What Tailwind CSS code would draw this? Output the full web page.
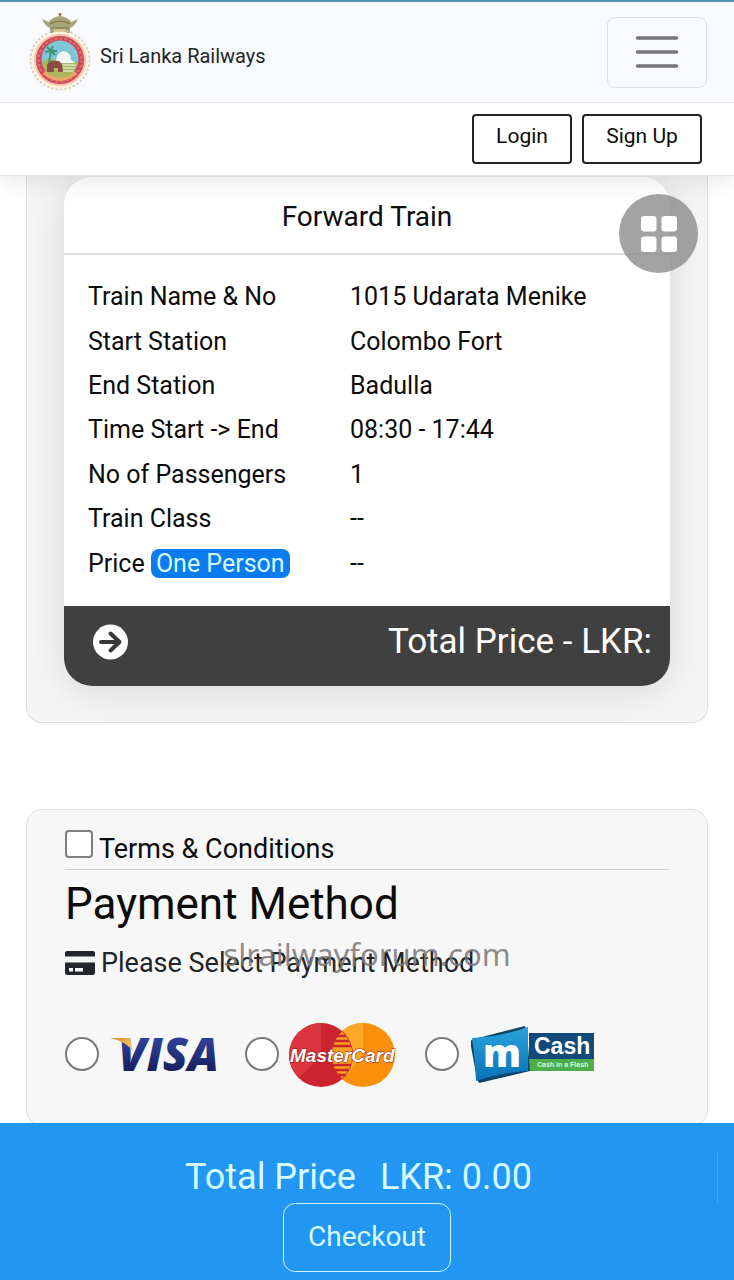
<!DOCTYPE html>
<html lang="en">
<head>
    <meta charset="UTF-8">
    <meta name="viewport" content="width=device-width, initial-scale=1.0">
    <title>Sri Lanka Railways - Reservation</title>
    <script src="https://cdn.jsdelivr.net/npm/@tailwindcss/browser@4"></script>
</head>
<body class="min-h-screen bg-white text-[#0c0c0c] font-['Roboto',sans-serif]">

    <!-- Navbar -->
    <header class="relative z-10 border-b border-[#e4e4e4] bg-white shadow-[0_8px_20px_rgba(0,0,0,0.08)]">
        <nav class="flex h-[103px] items-center justify-between border-t-2 border-b border-t-[#4f9aae] border-b-[#e4e4e6] bg-[#f9fafe] pl-7 pr-[27px]">
            <a href="#" class="flex items-center gap-2 text-xl text-[#212529]">
                <svg class="h-20 w-16" viewBox="0 0 64 80" aria-hidden="true">
                    <!-- crown -->
                    <path d="M14 7 L21 10 Q24 5 32 4 Q40 5 43 10 L50 7 Q47 14 42 16 V21 H22 V16 Q17 14 14 7Z" fill="#a7a579"/>
                    <path d="M22 12 Q32 6 42 12 M23 16 H41 M23 20 H41" fill="none" stroke="#777847" stroke-width="1.2"/>
                    <path d="M26 17 H38 V20 H26Z" fill="#d1bd84"/>
                    <circle cx="32" cy="2.5" r="1.4" fill="#9c5a48"/>
                    <!-- badge rings -->
                    <circle cx="32" cy="48" r="28.5" fill="#fdf0dc"/>
                    <circle cx="32" cy="48" r="29.5" fill="none" stroke="#dcc8ac" stroke-width="1.6" stroke-dasharray="2.4 2"/>
                    <circle cx="32" cy="48" r="26" fill="#f6c3a8"/>
                    <circle cx="32" cy="48" r="24" fill="#cf4660"/>
                    <circle cx="32" cy="48" r="21.5" fill="none" stroke="#dd7458" stroke-width="2" stroke-dasharray="3 2"/>
                    <path d="M15 62 Q32 76 49 62 L46 58 Q32 69 18 58Z" fill="#eda468"/>
                    <!-- scene -->
                    <circle cx="32" cy="47" r="18.5" fill="#7fc6d8"/>
                    <path d="M14 50 Q22 44 30 49 T50 49 Q48 65 32 65.5 Q16 64 14 50Z" fill="#a9b65a"/>
                    <path d="M28 49 Q29 40 36 39 Q43 41 43 48 L47 51 H28Z" fill="#f3f6f5"/>
                    <path d="M35 53 H48 M35 56 H47 M35 59 H45" stroke="#dfe6c8" stroke-width="1.4"/>
                    <path d="M19 60 V53 Q21 48 27 49 Q32 48 34 53 L35 60 H30 V56 H26 V60Z" fill="#8d4c43"/>
                    <path d="M21 51 L23 39 M23 39 L17 40 M23 39 L19 35 M23 39 L25 34 M23 39 L29 39 M23 39 L27 43" stroke="#3e9472" stroke-width="2" fill="none"/>
                </svg>
                <span class="pt-2">Sri Lanka Railways</span>
            </a>
            <button type="button" aria-label="Toggle navigation" class="flex h-[71px] w-[100px] items-center justify-center rounded-lg border border-[#dfe0e4]">
                <svg class="h-9 w-11" viewBox="0 0 44 36" fill="none" stroke="#77777b" stroke-width="3.5" stroke-linecap="round" aria-hidden="true">
                    <path d="M2.5 4H41.5M2.5 18H41.5M2.5 32H41.5"/>
                </svg>
            </button>
        </nav>
        <div class="flex h-[72px] justify-end gap-[10px] pt-[11px] pr-8">
            <button type="button" class="h-[50px] w-[100px] rounded border-2 border-[#222] pb-1 text-[21px]">Login</button>
            <button type="button" class="h-[50px] w-[120px] rounded border-2 border-[#222] pb-1 text-[21px]">Sign Up</button>
        </div>
    </header>

    <!-- Floating menu -->
    <button type="button" aria-label="Menu" class="fixed top-[194px] right-9 z-20 flex size-[79px] items-center justify-center rounded-full bg-[#8c8c8c]/80">
        <svg class="size-9" viewBox="0 0 36 36" fill="#fff" aria-hidden="true">
            <rect x="0" y="0" width="15.5" height="15.5" rx="3"/>
            <rect x="20.5" y="0" width="15.5" height="15.5" rx="3"/>
            <rect x="0" y="20.5" width="15.5" height="15.5" rx="3"/>
            <rect x="20.5" y="20.5" width="15.5" height="15.5" rx="3"/>
        </svg>
    </button>

    <main class="px-[26px] pb-[154px]">
        <!-- Train details -->
        <section class="overflow-hidden rounded-b-2xl border border-t-0 border-[#dedede] bg-[#f5f5f5] px-[37px] pt-px pb-9">
            <div class="overflow-hidden rounded-[28px] bg-white shadow-[0_5px_40px_rgba(0,0,0,0.12)]">
                <h2 class="border-b-2 border-[#dcdcdc] pt-5 pb-4 text-center text-[28px] leading-10">Forward Train</h2>
                <div class="px-6 py-5">
                    <table class="h-[311px] w-full text-left text-[25px] leading-8">
                        <tr><th scope="row" class="w-[262px] font-normal">Train Name &amp; No</th><td>1015 Udarata Menike</td></tr>
                        <tr><th scope="row" class="font-normal">Start Station</th><td>Colombo Fort</td></tr>
                        <tr><th scope="row" class="font-normal">End Station</th><td>Badulla</td></tr>
                        <tr><th scope="row" class="font-normal">Time Start -&gt; End</th><td>08:30 - 17:44</td></tr>
                        <tr><th scope="row" class="font-normal">No of Passengers</th><td>1</td></tr>
                        <tr><th scope="row" class="font-normal">Train Class</th><td>--</td></tr>
                        <tr><th scope="row" class="font-normal">Price <span class="rounded-lg bg-[#0d7bf0] px-[5px] text-[#d5fbff]">One Person</span></th><td>--</td></tr>
                    </table>
                </div>
                <div class="flex h-20 items-center justify-between bg-[#404040] pr-[18px] pb-2 pl-7 text-[35px] text-white">
                    <svg class="size-9" viewBox="0 0 36 36" aria-hidden="true">
                        <circle cx="18.5" cy="18" r="17.5" fill="#fff"/>
                        <path d="M9 18H27.5M18.5 9.5L27.5 18L18.5 26.5" fill="none" stroke="#383838" stroke-width="4" stroke-linecap="round" stroke-linejoin="round"/>
                    </svg>
                    <span>Total Price - LKR:</span>
                </div>
            </div>
        </section>

        <!-- Payment -->
        <section class="relative mt-[86px] h-[317px] rounded-2xl border border-[#dedede] bg-[#f7f7f7] px-[38px] pt-[19px]">
            <div class="flex h-[41px] gap-[6px] border-b border-[#cfcfcf] text-[27px]">
                <input type="checkbox" id="terms" class="mt-px size-7 appearance-none rounded border-2 border-[#7d7d7d] bg-white checked:bg-[#2196f3]">
                <label for="terms" class="mt-1 leading-8">Terms &amp; Conditions</label>
            </div>
            <h1 class="mt-2 text-[44px] leading-[52px]">Payment Method</h1>
            <p class="mt-[15px] flex items-center gap-[6px] text-[27px] leading-9 text-[#212529]">
                <svg class="h-6 w-[30px]" viewBox="0 0 30 24" fill="#23262b" aria-hidden="true">
                    <path d="M2 0H28Q30 0 30 2V5.5H0V2Q0 0 2 0Z"/>
                    <path fill-rule="evenodd" d="M0 11.5H30V21.5Q30 24 27.5 24H2.5Q0 24 0 21.5ZM4 17V20.5H8V17ZM10 17V20.5H18V17Z"/>
                </svg>
                Please Select Payment Method
            </p>
            <span class="pointer-events-none absolute inset-x-0 top-[122px] text-center font-['Noto_Sans',sans-serif] text-[31px] leading-[44px] text-[#777]/85">slrailwayforum.com</span>

            <div class="mt-9 flex items-center">
                <label class="flex w-[180px] items-center gap-3">
                    <input type="radio" name="payment" value="visa" class="size-[34px] shrink-0 appearance-none rounded-full border-2 border-[#777] bg-white checked:border-8">
                    <svg class="h-[74px] w-[110px]" viewBox="0 0 110 74" role="img" aria-label="Visa">
                        <defs>
                            <linearGradient id="visaBlue" x1="0" y1="0" x2="0" y2="1">
                                <stop offset="0.3" stop-color="#2f3f97"/>
                                <stop offset="0.85" stop-color="#141c55"/>
                            </linearGradient>
                            <linearGradient id="visaGold" x1="0" y1="0" x2="1" y2="1">
                                <stop offset="0" stop-color="#d98a2b"/>
                                <stop offset="1" stop-color="#f6d27a"/>
                            </linearGradient>
                        </defs>
                        <text x="7" y="54" font-family="Open Sans" font-size="46" font-weight="800" font-style="italic" fill="url(#visaBlue)">VISA</text>
                        <path d="M-1 21H19L22 34Q14 24 -1 21Z" fill="url(#visaGold)"/>
                    </svg>
                </label>
                <label class="flex w-[180px] items-center gap-2">
                    <input type="radio" name="payment" value="mastercard" class="size-[34px] shrink-0 appearance-none rounded-full border-2 border-[#777] bg-white checked:border-8">
                    <svg class="h-[74px] w-[112px]" viewBox="0 0 112 74" role="img" aria-label="MasterCard">
                        <circle cx="76" cy="38" r="32" fill="#f9900c"/>
                        <path d="M76 6A32 32 0 0 0 56 63L76 38Z" fill="#fba826"/>
                        <circle cx="34" cy="38" r="32" fill="#cb2430"/>
                        <path d="M34 6A32 32 0 0 0 12 61L34 38Z" fill="#dc3540"/>
                        <path d="M55 14.5A32 32 0 0 1 55 61.5A32 32 0 0 1 55 14.5Z" fill="#f9a01c"/>
                        <path d="M49 19H59M47 24H62M46 29H64M46 48H64M48 53H62M50 58H59" stroke="#cb2430" stroke-width="2.4"/>
                        <text x="3" y="45" font-family="Liberation Sans" font-size="19" font-weight="700" font-style="italic" fill="#fff" stroke="#8f2020" stroke-width="1" paint-order="stroke">MasterCard</text>
                    </svg>
                </label>
                <label class="flex items-center gap-3">
                    <input type="radio" name="payment" value="mcash" class="size-[34px] shrink-0 appearance-none rounded-full border-2 border-[#777] bg-white checked:border-8">
                    <svg class="h-[74px] w-[124px]" viewBox="0 0 124 74" role="img" aria-label="mCash">
                        <defs>
                            <linearGradient id="mcashBlue" x1="0" y1="0" x2="0" y2="1">
                                <stop offset="0" stop-color="#2ba3dc"/>
                                <stop offset="1" stop-color="#0872b6"/>
                            </linearGradient>
                        </defs>
                        <path d="M58 16H123V42H58Z" fill="#124a7c"/>
                        <path d="M58 42H123V54H58Z" fill="#4fae4c"/>
                        <path d="M-1 24L3 22L54 9L56 15L59 54L8 66L6 62Z" fill="#0b4668"/>
                        <path d="M1 21Q30 20 57 10V54Q34 55 5 64Q4 40 1 21Z" fill="url(#mcashBlue)"/>
                        <text x="12" y="50" font-family="Open Sans" font-size="38" font-weight="800" fill="#fff">m</text>
                        <text x="63" y="37" font-family="Liberation Sans" font-size="23" font-weight="700" fill="#fff">Cash</text>
                        <text x="66" y="50" font-family="Liberation Sans" font-size="7" font-weight="700" fill="#d9f7c8">Cash in a Flash</text>
                    </svg>
                </label>
            </div>
        </section>
    </main>

    <!-- Checkout bar -->
    <footer class="fixed inset-x-0 bottom-0 z-10 flex h-[157px] flex-col bg-[#2196f3] pt-7 text-[#d5fbff]">
        <div class="mr-4 flex h-[52px] items-center justify-center gap-6 border-r border-[#5f9fd2] text-4xl">
            <span>Total Price</span>
            <span>LKR: 0.00</span>
        </div>
        <button type="button" class="mx-auto h-[69px] w-[168px] rounded-xl border border-[#c9f6ff] pb-[2px] text-[28px]">Checkout</button>
    </footer>

</body>
</html>
